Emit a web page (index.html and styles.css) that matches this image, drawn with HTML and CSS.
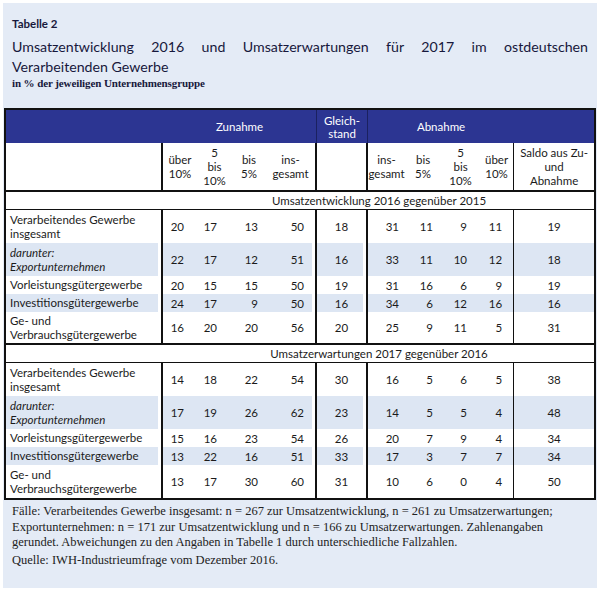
FILE: index.html
```html
<!DOCTYPE html>
<html lang="de">
<head>
<meta charset="utf-8">
<link rel="stylesheet" href="styles.css">
</head>
<body>
<div class="panel">
  <div class="head">
    <div class="tab">Tabelle 2</div>
    <div class="title">Umsatzentwicklung 2016 und Umsatzerwartungen für 2017 im ostdeutschen Verarbeitenden Gewerbe</div>
    <div class="sub">in % der jeweiligen Unternehmensgruppe</div>
  </div>
  <table class="data">
    <colgroup>
      <col class="w-lbl"><col class="w-z1"><col class="w-z2"><col class="w-z3"><col class="w-z4">
      <col class="w-g"><col class="w-a1"><col class="w-a2"><col class="w-a3"><col class="w-a4"><col class="w-s">
    </colgroup>
    <thead>
      <tr class="hr1">
        <th class="lbl"></th>
        <th colspan="4" class="ge">Zunahme</th>
        <th class="ge">Gleich-<br>stand</th>
        <th colspan="4">Abnahme</th>
        <th></th>
      </tr>
      <tr class="hr2">
        <th class="lbl"></th>
        <th>über<br>10%</th>
        <th>5<br>bis<br>10%</th>
        <th>bis<br>5%</th>
        <th class="ge">ins-<br>gesamt</th>
        <th class="ge"></th>
        <th>ins-<br>gesamt</th>
        <th>bis<br>5%</th>
        <th>5<br>bis<br>10%</th>
        <th class="ge1">über<br>10%</th>
        <th>Saldo aus Zu-<br>und<br>Abnahme</th>
      </tr>
    </thead>
    <tbody>
      <tr class="sec"><td colspan="11">Umsatzentwicklung 2016 gegenüber 2015</td></tr>
      <tr class="r2l"><td class="lbl">Verarbeitendes Gewerbe<br>insgesamt</td><td class="z1">20</td><td class="z2">17</td><td class="z3">13</td><td class="z4 ge">50</td><td class="g ge">18</td><td class="a1">31</td><td class="a2">11</td><td class="a3">9</td><td class="a4 ge1">11</td><td class="s">19</td></tr>
      <tr class="r2l alt"><td class="lbl"><i>darunter:<br>Exportunternehmen</i></td><td class="z1">22</td><td class="z2">17</td><td class="z3">12</td><td class="z4 ge">51</td><td class="g ge">16</td><td class="a1">33</td><td class="a2">11</td><td class="a3">10</td><td class="a4 ge1">12</td><td class="s">18</td></tr>
      <tr class="r1l"><td class="lbl">Vorleistungsgütergewerbe</td><td class="z1">20</td><td class="z2">15</td><td class="z3">15</td><td class="z4 ge">50</td><td class="g ge">19</td><td class="a1">31</td><td class="a2">16</td><td class="a3">6</td><td class="a4 ge1">9</td><td class="s">19</td></tr>
      <tr class="r1l alt"><td class="lbl">Investitionsgütergewerbe</td><td class="z1">24</td><td class="z2">17</td><td class="z3">9</td><td class="z4 ge">50</td><td class="g ge">16</td><td class="a1">34</td><td class="a2">6</td><td class="a3">12</td><td class="a4 ge1">16</td><td class="s">16</td></tr>
      <tr class="r2l last"><td class="lbl">Ge- und<br>Verbrauchsgütergewerbe</td><td class="z1">16</td><td class="z2">20</td><td class="z3">20</td><td class="z4 ge">56</td><td class="g ge">20</td><td class="a1">25</td><td class="a2">9</td><td class="a3">11</td><td class="a4 ge1">5</td><td class="s">31</td></tr>
      <tr class="sec"><td colspan="11">Umsatzerwartungen 2017 gegenüber 2016</td></tr>
      <tr class="r2l"><td class="lbl">Verarbeitendes Gewerbe<br>insgesamt</td><td class="z1">14</td><td class="z2">18</td><td class="z3">22</td><td class="z4 ge">54</td><td class="g ge">30</td><td class="a1">16</td><td class="a2">5</td><td class="a3">6</td><td class="a4 ge1">5</td><td class="s">38</td></tr>
      <tr class="r2l alt"><td class="lbl"><i>darunter:<br>Exportunternehmen</i></td><td class="z1">17</td><td class="z2">19</td><td class="z3">26</td><td class="z4 ge">62</td><td class="g ge">23</td><td class="a1">14</td><td class="a2">5</td><td class="a3">5</td><td class="a4 ge1">4</td><td class="s">48</td></tr>
      <tr class="r1l"><td class="lbl">Vorleistungsgütergewerbe</td><td class="z1">15</td><td class="z2">16</td><td class="z3">23</td><td class="z4 ge">54</td><td class="g ge">26</td><td class="a1">20</td><td class="a2">7</td><td class="a3">9</td><td class="a4 ge1">4</td><td class="s">34</td></tr>
      <tr class="r1l alt"><td class="lbl">Investitionsgütergewerbe</td><td class="z1">13</td><td class="z2">22</td><td class="z3">16</td><td class="z4 ge">51</td><td class="g ge">33</td><td class="a1">17</td><td class="a2">3</td><td class="a3">7</td><td class="a4 ge1">7</td><td class="s">34</td></tr>
      <tr class="r2l"><td class="lbl">Ge- und<br>Verbrauchsgütergewerbe</td><td class="z1">13</td><td class="z2">17</td><td class="z3">30</td><td class="z4 ge">60</td><td class="g ge">31</td><td class="a1">10</td><td class="a2">6</td><td class="a3">0</td><td class="a4 ge1">4</td><td class="s">50</td></tr>
    </tbody>
  </table>
  <div class="notes">
    <p>Fälle: Verarbeitendes Gewerbe insgesamt: n = 267 zur Umsatzentwicklung, n = 261 zu Umsatzerwartungen; Exportunternehmen: n = 171 zur Umsatzentwicklung und n = 166 zu Umsatzerwartungen. Zahlenangaben gerundet. Abweichungen zu den Angaben in Tabelle 1 durch unterschiedliche Fallzahlen.</p>
    <p>Quelle: IWH-Industrieumfrage vom Dezember 2016.</p>
  </div>
</div>
</body>
</html>
```

FILE: styles.css
```css
html, body {
  margin: 0;
  padding: 0;
  background: #ffffff;
}
.panel {
  margin: 3px;
  width: 594px;
  height: 585px;
  box-sizing: border-box;
  background: #e4ebf6;
  padding: 13px 1px 0 1px;
}
.head {
  padding: 0 8px 0 8px;
  color: #17183c;
}
.tab {
  font-family: "Lato", sans-serif;
  font-weight: 700;
  font-size: 11.5px;
  line-height: 14px;
  height: 14px;
  padding-top: 1px;
}
.title {
  margin-top: 6px;
  font-family: "Lato", sans-serif;
  font-size: 14.2px;
  line-height: 20px;
  text-align: justify;
}
.sub {
  font-family: "Liberation Serif", serif;
  font-weight: 700;
  font-size: 11px;
  line-height: 12px;
  letter-spacing: -0.1px;
}
table.data {
  margin-top: 19px;
  width: 592px;
  table-layout: fixed;
  border-collapse: separate;
  border-spacing: 0;
  border: 2px solid #111;
  background: #fff;
  font-family: "Lato", sans-serif;
  font-size: 11.5px;
  color: #1b1b1b;
}
.w-lbl { width: 157px; }
.w-z1 { width: 34px; }
.w-z2 { width: 35px; }
.w-z3 { width: 34px; }
.w-z4 { width: 51px; }
.w-g { width: 51px; }
.w-a1 { width: 37px; }
.w-a2 { width: 36px; }
.w-a3 { width: 39px; }
.w-a4 { width: 34px; }
.w-s { width: 80px; }
th, td {
  padding: 0;
  box-sizing: border-box;
}
.hr1 th {
  background: #2c3592;
  color: #ffffff;
  font-weight: 400;
  height: 33px;
  line-height: 13px;
  text-align: center;
  vertical-align: middle;
}
.hr1 th.ge {
  border-right: 1px solid #1b2160;
}
.hr1 th.lbl {
  border-right: 0;
}
.hr2 th {
  font-weight: 400;
  height: 49px;
  line-height: 14px;
  text-align: center;
  vertical-align: middle;
  border-bottom: 2px solid #111;
}
.ge { border-right: 2px solid #111; }
.ge1 { border-right: 1px solid #111; }
.hr2 th.lbl, td.lbl { border-right: 2px solid #111; }
.sec td {
  height: 18px;
  line-height: 14px;
  padding-left: 158px;
  text-align: center;
  border-bottom: 1px solid #111;
  vertical-align: middle;
}
tbody tr.last td { border-bottom: 2px solid #111; }
tbody td.lbl {
  text-align: left;
  padding-left: 4px;
  line-height: 13.5px;
  vertical-align: middle;
}
tbody td { vertical-align: middle; }
tr.r2l td { height: 33px; }
tr.r1l td { height: 18px; }
tr.alt td { background: #dde6f3; }
tr.alt td.lbl, tr.alt td.z4, tr.alt td.g { box-shadow: inset -3px 0 0 #ffffff; }
td.z1, td.z2, td.z3, td.z4, td.a1, td.a2, td.a3, td.a4 { text-align: right; }
td.z1 { padding-right: 13px; }
td.z2 { padding-right: 15px; }
td.z3 { padding-right: 8px; }
td.z4 { padding-right: 11px; }
td.a1 { padding-right: 6px; }
td.a2 { padding-right: 8px; }
td.a3 { padding-right: 13px; }
td.a4 { padding-right: 11px; }
td.g, td.s { text-align: center; }
.notes {
  padding: 4px 8px 0 8px;
  font-family: "Liberation Serif", serif;
  font-size: 12.5px;
  line-height: 15.5px;
  color: #222;
}
.notes p {
  margin: 0 0 2px 0;
}
```
